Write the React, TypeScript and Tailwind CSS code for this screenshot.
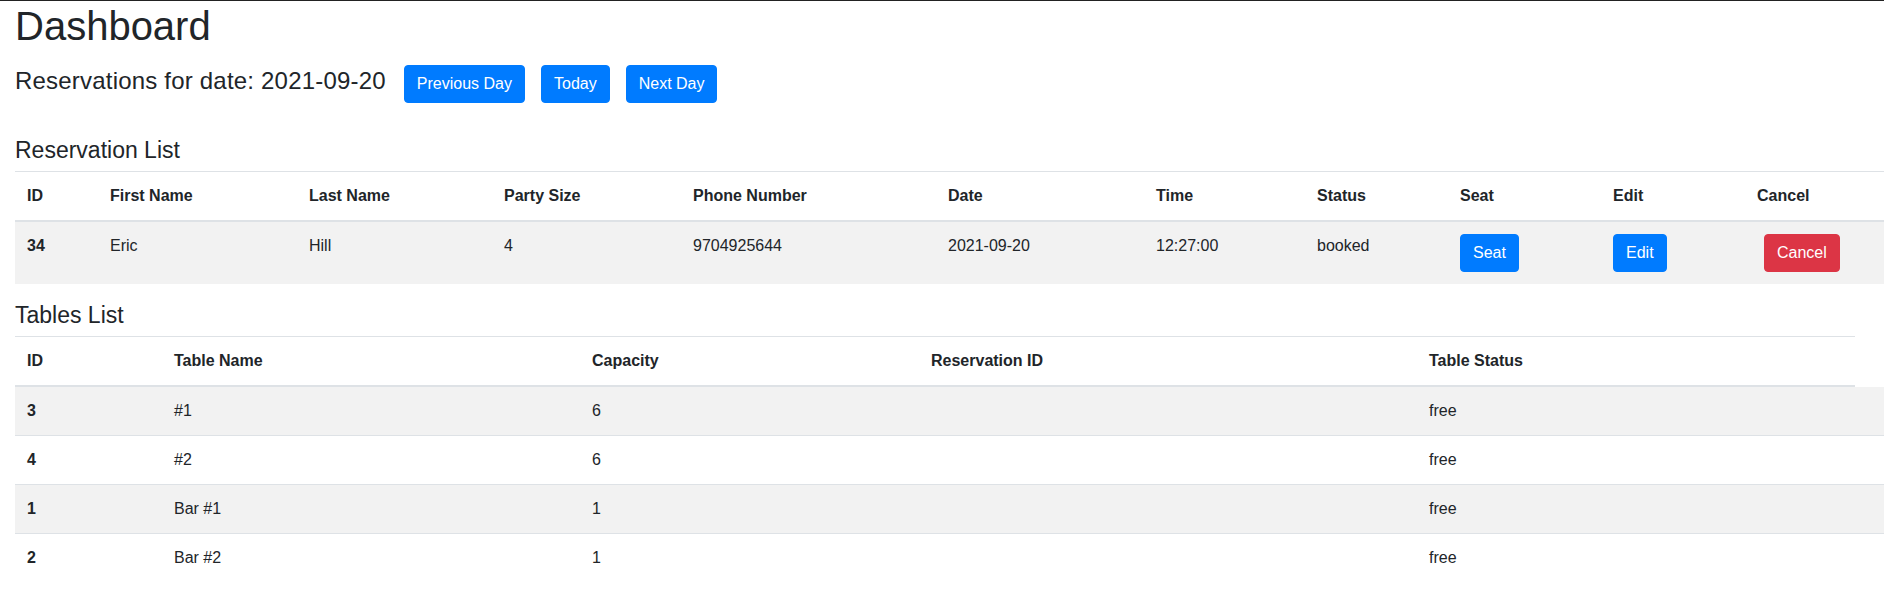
import React from "react";

const resCols =
  "grid grid-cols-[83px_199px_195px_189px_255px_208px_161px_143px_153px_144px_1fr]";
const tabCols = "grid grid-cols-[147px_418px_339px_498px_1fr]";

function Btn({ children, red }: { children: React.ReactNode; red?: boolean }) {
  return (
    <button
      className={
        red
          ? "h-[38px] rounded-[4px] border border-[#dc3545] bg-[#dc3545] px-[12px] text-[16px] leading-[24px] text-white"
          : "h-[38px] rounded-[4px] border border-[#007bff] bg-[#007bff] px-[12px] text-[16px] leading-[24px] text-white"
      }
    >
      {children}
    </button>
  );
}

const resHeaders = [
  "ID",
  "First Name",
  "Last Name",
  "Party Size",
  "Phone Number",
  "Date",
  "Time",
  "Status",
  "Seat",
  "Edit",
  "Cancel",
];

const tables = [
  { id: "3", name: "#1", cap: "6", status: "free" },
  { id: "4", name: "#2", cap: "6", status: "free" },
  { id: "1", name: "Bar #1", cap: "1", status: "free" },
  { id: "2", name: "Bar #2", cap: "1", status: "free" },
];

export default function App() {
  return (
    <div className="min-h-[599px] w-[1884px] overflow-hidden border-t border-[#222222] bg-white pl-[15px] font-['Liberation_Sans',Arial,sans-serif] text-[#212529]">
      <h1 className="mt-[1px] text-[40px] leading-[48px] font-medium">Dashboard</h1>
      <div className="mt-[15px] flex h-[38px] items-center">
        <h4 className="mb-[8px] text-[24px] leading-[29px] font-medium tracking-[0.2px]">
          Reservations for date: 2021-09-20
        </h4>
        <div className="ml-[18px] flex gap-[16px]">
          <Btn>Previous Day</Btn>
          <Btn>Today</Btn>
          <Btn>Next Day</Btn>
        </div>
      </div>

      <h5 className="mt-[33px] mb-[7px] text-[23px] leading-[28px] font-medium">Reservation List</h5>
      <div className="text-[16px] leading-[24px]">
        <div className={`${resCols} border-t border-b-2 border-[#dee2e6] font-bold`}>
          {resHeaders.map((h) => (
            <div key={h} className="p-[12px]">
              {h}
            </div>
          ))}
        </div>
        <div className={`${resCols} bg-[#f2f2f2]`}>
          <div className="p-[12px] font-bold">34</div>
          <div className="p-[12px]">Eric</div>
          <div className="p-[12px]">Hill</div>
          <div className="p-[12px]">4</div>
          <div className="p-[12px]">9704925644</div>
          <div className="p-[12px]">2021-09-20</div>
          <div className="p-[12px]">12:27:00</div>
          <div className="p-[12px]">booked</div>
          <div className="p-[12px]">
            <Btn>Seat</Btn>
          </div>
          <div className="p-[12px]">
            <Btn>Edit</Btn>
          </div>
          <div className="p-[12px] pl-[19px]">
            <Btn red>Cancel</Btn>
          </div>
        </div>
      </div>

      <h5 className="mt-[17px] mb-[7px] text-[23px] leading-[28px] font-medium">Tables List</h5>
      <div className="text-[16px] leading-[24px]">
        <div className={`${tabCols} mr-[29px] border-t border-b-2 border-[#dee2e6] font-bold`}>
          <div className="p-[12px]">ID</div>
          <div className="p-[12px]">Table Name</div>
          <div className="p-[12px]">Capacity</div>
          <div className="p-[12px]">Reservation ID</div>
          <div className="p-[12px]">Table Status</div>
        </div>
        {tables.map((t, i) => (
          <div
            key={t.id}
            className={`${tabCols} ${i > 0 ? "border-t border-[#dee2e6]" : ""} ${
              i % 2 === 0 ? "bg-[#f2f2f2]" : "bg-white"
            }`}
          >
            <div className="p-[12px] font-bold">{t.id}</div>
            <div className="p-[12px]">{t.name}</div>
            <div className="p-[12px]">{t.cap}</div>
            <div className="p-[12px]"></div>
            <div className="p-[12px]">{t.status}</div>
          </div>
        ))}
      </div>
    </div>
  );
}
